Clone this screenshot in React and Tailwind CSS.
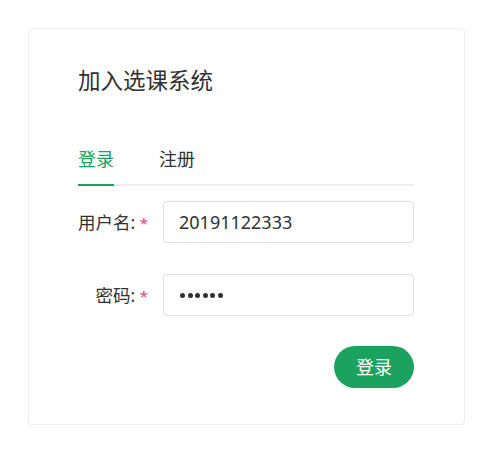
import React from "react";

export default function App() {
  return (
    <div
      className="w-[489px] h-[450px] bg-white pt-[28px] pl-[28px]"
      style={{ fontFamily: '"Noto Sans", "Noto Sans CJK SC", sans-serif' }}
    >
      <div className="w-[437px] h-[397px] border border-[#ebeef5] rounded-[4px] pt-[37px] pl-[49px] pr-[50px] flex flex-col">
        <div className="h-[30px] leading-[30px] text-[22.5px] text-[#303133]">加入选课系统</div>

        <div className="mt-[51px] flex gap-[45px] border-b-2 border-[#eeeeee] text-[18px]">
          <div className="-mb-[2px] pb-[13px] border-b-2 border-[#1aa25e] leading-[24px] text-[#1aa25e]">登录</div>
          <div className="pb-[13px] leading-[24px] text-[#303133]">注册</div>
        </div>

        <div className="mt-[15px] flex items-center h-[42px]">
          <div className="w-[85px] pr-[15px] text-right text-[17.5px] text-[#303133] leading-[24px] whitespace-nowrap">
            用户名: <span className="text-[#e0457b] text-[15px]">*</span>
          </div>
          <div className="flex-1 h-[42px] border border-[#dcdfe6] rounded-[4px] flex items-center pl-[15px] text-[18px] text-[#303133]">
            20191122333
          </div>
        </div>

        <div className="mt-[31px] flex items-center h-[42px]">
          <div className="w-[85px] pr-[15px] text-right text-[17.5px] text-[#303133] leading-[24px] whitespace-nowrap">
            密码: <span className="text-[#e0457b] text-[15px]">*</span>
          </div>
          <div className="flex-1 h-[42px] border border-[#dcdfe6] rounded-[4px] flex items-center pl-[16px] gap-[2.5px]">
            {[0, 1, 2, 3, 4, 5].map((i) => (
              <span key={i} className="w-[5px] h-[5px] rounded-full bg-[#303133]" />
            ))}
          </div>
        </div>

        <div className="mt-[30px] flex justify-end">
          <div className="w-[80px] h-[42px] rounded-full bg-[#1aa25e] text-white text-[18px] flex items-center justify-center">
            登录
          </div>
        </div>
      </div>
    </div>
  );
}
